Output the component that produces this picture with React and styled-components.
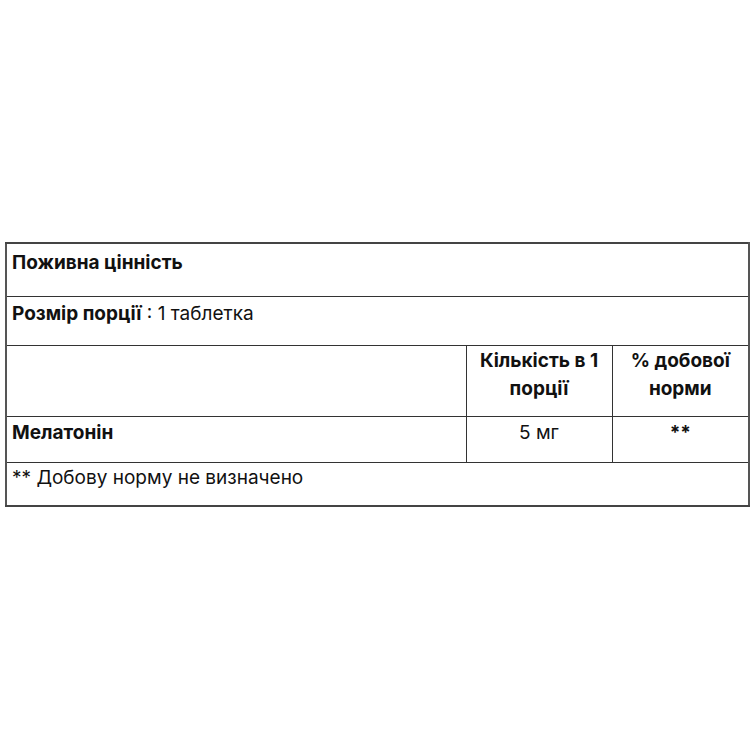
import React from "react";
import styled, { createGlobalStyle } from "styled-components";

const GlobalStyle = createGlobalStyle`
  body {
    margin: 0;
    background: #fff;
    font-family: Inter, "Noto Sans", sans-serif;
    color: #111;
  }
`;

const Page = styled.div`
  padding: 242px 2px 0 5px;
`;

const Table = styled.table`
  width: 743px;
  border-collapse: collapse;
  table-layout: fixed;
  border-left: 2px solid #555;
  border-right: 2px solid #555;
  border-top: 2px solid #444;
  border-bottom: 2px solid #444;
  font-size: 19px;
  line-height: 28px;
`;

const Cell = styled.td`
  border: 1.5px solid #333;
  vertical-align: top;
  height: ${(p) => p.$h}px;
  padding: ${(p) => p.$pt || 2}px 5px 0 5px;
  box-sizing: border-box;
  text-align: ${(p) => (p.$center ? "center" : "left")};
  font-weight: ${(p) => (p.$bold ? 700 : 400)};
`;

const Bold = styled.span`
  font-weight: 700;
`;

export default function App() {
  return (
    <>
      <GlobalStyle />
      <Page>
        <Table>
          <colgroup>
            <col style={{ width: 460 }} />
            <col style={{ width: 146 }} />
            <col style={{ width: 137 }} />
          </colgroup>
          <tbody>
            <tr>
              <Cell colSpan={3} $h={53} $pt={5} $bold>
                Поживна цінність
              </Cell>
            </tr>
            <tr>
              <Cell colSpan={3} $h={49} $pt={3}>
                <Bold>Розмір порції</Bold> : 1 таблетка
              </Cell>
            </tr>
            <tr>
              <Cell $h={71} />
              <Cell $h={71} $pt={1} $center $bold>
                Кількість в 1 порції
              </Cell>
              <Cell $h={71} $pt={1} $center $bold>
                % добової норми
              </Cell>
            </tr>
            <tr>
              <Cell $h={46} $bold>
                Мелатонін
              </Cell>
              <Cell $h={46} $center>
                5 мг
              </Cell>
              <Cell $h={46} $center $bold>
                **
              </Cell>
            </tr>
            <tr>
              <Cell colSpan={3} $h={44} $pt={1}>
                ** Добову норму не визначено
              </Cell>
            </tr>
          </tbody>
        </Table>
      </Page>
    </>
  );
}
